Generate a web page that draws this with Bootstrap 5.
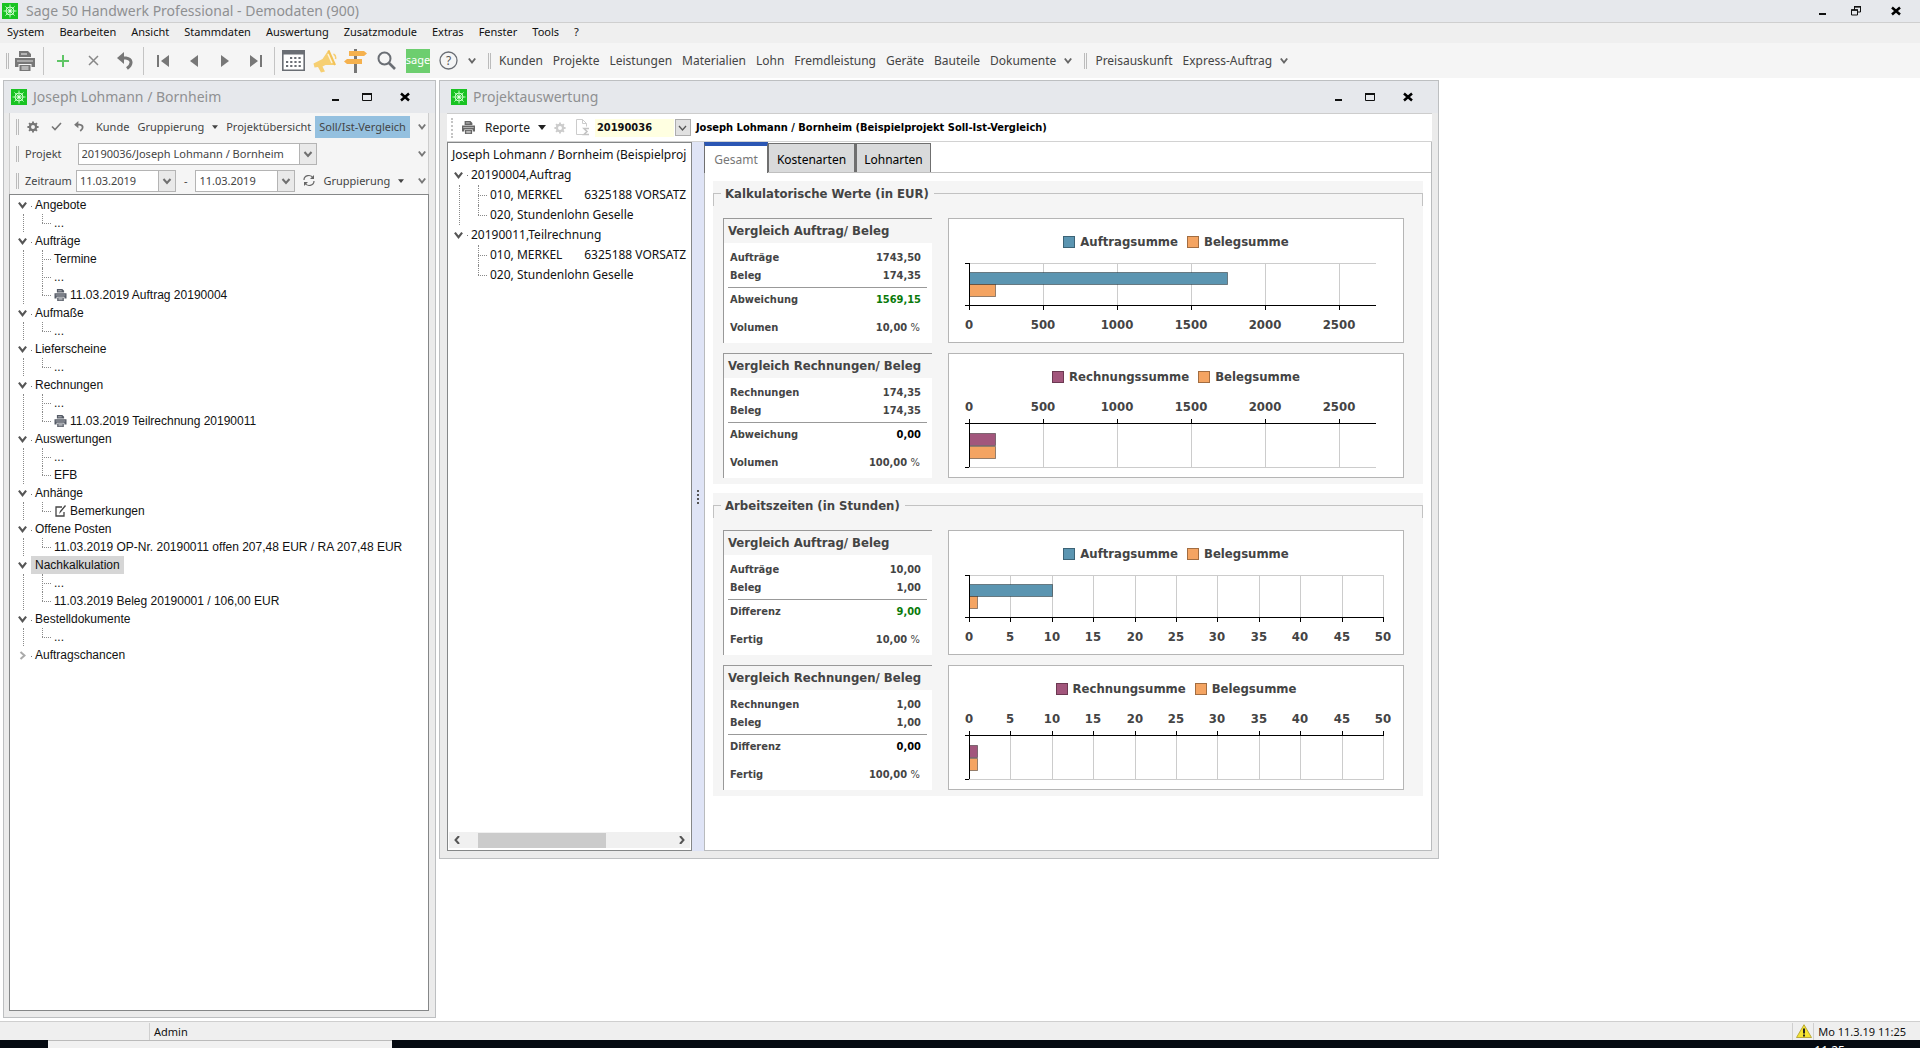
<!DOCTYPE html>
<html lang="de">
<head>
<meta charset="utf-8">
<meta name="viewport" content="width=device-width, initial-scale=1">
<title>Sage 50 Handwerk Professional - Demodaten (900)</title>
<link rel="stylesheet" href="https://cdn.jsdelivr.net/npm/bootstrap@5.3.0/dist/css/bootstrap.min.css">
<style>
:root{--ui:"Noto Sans","Open Sans",sans-serif;--tah:"DejaVu Sans Condensed","DejaVu Sans",sans-serif;--frame:#ebebeb;--cap:#e6e8ec}
body{font:12px/18px var(--ui);color:#444;background:#fff;overflow:hidden}
button{border:0;background:none;padding:0;color:inherit;font:inherit}
svg{display:block;flex:none}
.titletext{font-size:14px;line-height:20px;color:#8f9092}
.appbar{height:23px;background:var(--cap);border-bottom:1px solid #cfcfcf;padding:0 0 1px 2px}
.menubar{height:20px;background:#efefef;padding:0 0 2px 7px;gap:15px;font-size:11px;color:#111}
.menubar a{color:inherit;text-decoration:none}
.mainbar{height:35px;background:#f5f5f5;padding-left:6px}
.toolbtn{width:31px;height:30px;display:flex;align-items:center;justify-content:center}
.vsep{width:1px;height:28px;background:#c4c4c4;margin:0 3px}
.grip{width:3px;height:16px;border-left:1px solid #bbb;border-right:1px solid #bbb;flex:none}
.grip.dots{border-right:0;border-left:2px dotted #c4c4c4;height:20px}
.modlinks{gap:10px}
.workspace{display:grid;grid-template-columns:433fr 1000fr 478fr;column-gap:3px;padding:2px 0 3px 3px;min-height:0}
.mdi{border:1px solid #bdbfc1;background:var(--frame);display:flex;flex-direction:column;min-width:0;min-height:0}
.mdi-cap{height:32px;background:var(--cap);padding-left:7px;gap:6px;flex:none}
.mdi-cap .titletext{line-height:30px}
.winbtns button{height:22px;display:flex;align-items:center;justify-content:center}
.mdi .winbtns{padding-right:7px}
.mdi .winbtns button{width:32px}
.mdi .winbtns button:nth-child(2){width:30px}
.mdi .winbtns button:last-child{width:46px}
.appbar .winbtns button{width:34px}
.appbar .winbtns button:nth-child(2){width:32px}
.appbar .winbtns button:last-child{width:48px}
.lwrap{margin:0 6px 6px 5px}
.tools{background:#f5f5f5;border:1px solid #cdcdcd;border-width:0 1px;font-size:11px}
.toolrow{height:27px;padding:0 2px 0 6px}
.toolrow .grip{margin-right:4px}
.toolrow label{margin-left:2px}
.hot{background:#94c0df;height:22px;padding:0 4px}
.sel{appearance:none;border:1px solid #b4b4b4;border-radius:0;height:22px;font:11px/18px var(--ui);color:#444;padding:0 20px 0 3px;background:#fff url("data:image/svg+xml,%3Csvg xmlns='http://www.w3.org/2000/svg' width='17' height='20'%3E%3Cpath d='M0 0h17v20H0z' fill='%23e9e9e9'/%3E%3Cpath d='M.5 0v20' stroke='%23b4b4b4'/%3E%3Cpath d='M5.500 8l3.500 4 3.500-4' fill='none' stroke='%23707070' stroke-width='2'/%3E%3C/svg%3E") right center no-repeat}
#prj{width:239px}.dat{width:100px}
.treebox{border:1px solid #858788;background:#fff;color:#111;overflow:hidden}
.tree,.tree ul{list-style:none;margin:0;padding:0}
.tree{--rh:18px;white-space:pre}
.trow{height:var(--rh);line-height:var(--rh);display:flex;align-items:center}
.tree>li>.trow .tw{width:13px;display:flex;justify-content:center;flex:none}
.tree>li>.trow .tl{margin-left:2px;padding:0 4px;background:linear-gradient(#777,#777) 0 10px/1px 1px no-repeat}
.tree>li>.trow .tl.picked{background:#d6d6d6}
.tree ul{margin-left:7px;border-left:1px dotted #8a8a8a;padding-left:18px}
.tree>li.last>ul{border-color:transparent}
.tree ul li{position:relative;padding-left:12px}
.tree ul li::before{content:"";position:absolute;left:0;top:0;height:100%;border-left:1px dotted #8a8a8a}
.tree ul li:last-child::before{height:50%}
.tree ul li::after{content:"";position:absolute;left:0;top:50%;width:9px;border-top:1px dotted #8a8a8a}
.trow svg.ico{margin-right:3px}
.ltree{font-family:"Liberation Sans",Arial,sans-serif;padding:1px 0 0 6px}
.rtree{--rh:20px;padding:2px 0 0 4px}
.hscroll{height:16px;background:#f0f0f0;margin:0 1px 2px;padding:0 5px}
.hthumb{height:15px;background:#cbcbcb;width:128px;margin-left:18px}
.splitter{width:12px;background:#dfe4f6;flex:none}
.rwrap{margin:0 6px 7px 7px;border-top:1px solid #cdcdcd}
.rtools{background:#fff;height:28px;border-bottom:1px solid #d2d2d2;padding-left:4px;color:#222}
.repbtn{margin-left:10px}
.nr{width:79px;height:18px;border:0;background:#ffffe1;font:bold 11px var(--tah);color:#111;padding:0 2px}
.nrbtn{width:16px;height:17px;background:#e1e1e1;border:1px solid #adadad;margin:0 5px 0 1px}
.rname{font:bold 11px/18px var(--tah);color:#000}
.rbox{width:245px;flex:none}
.rpane{min-width:0;border:1px solid #b9bbbd;border-width:0 1px 1px 0}
.ptabs{display:flex;align-items:flex-end;height:31px;border-bottom:1px solid #bfbfbf}
.ptab{height:29px;background:#d9dadb;border:1px solid #6f6f6f;border-bottom:0;color:#000;font-size:12px;text-align:center;padding-top:3px}
.ptab.on{height:31px;background:#fff;border-top:4px solid #2b56b3;color:#777;margin-bottom:-1px;padding:0}
.t1{width:64px}.t2{width:87px}.t3{width:76px;border-left-width:2px}
.pbody{border-left:1px solid #b9bbbd;padding:8px 8px 54px 8px}
.grp{background:#f5f5f5;padding:0 19px 6px 10px;margin-bottom:9px}
.grp:last-child{margin-bottom:0}
.grp-head{height:37px;margin:0 -19px 0 -10px;padding-top:4px;font:bold 13px/18px var(--tah)}
.grp-head::before,.grp-head::after{content:"";height:13px;border-top:1px solid #c2c2c2;margin-top:8px}
.grp-head::before{width:8px;border-left:1px solid #c2c2c2}
.grp-head::after{flex:1;border-right:1px solid #c2c2c2}
.grp-head h2{font:inherit;margin:0;padding:0 5px 0 4px}
.pair{display:flex;gap:16px}
.pair+.pair{margin-top:10px}
.stat{width:209px;height:125px;flex:none;background:#fff;border-top:1px solid #999;border-left:1px solid #999;font:bold 11px/18px var(--tah);padding-right:5px}
.stat table{width:100%;border-collapse:separate;border-spacing:0}
.stat caption{caption-side:top;background:#f5f5f5;margin-right:-5px;padding:0 0 0 4px;font:bold 13px/24px var(--tah);color:#444;height:24px;white-space:nowrap}
.stat th{padding:0 0 0 6px}
.stat td{padding:0 6px 0 0;text-align:right}
.stat .r1>*{padding-top:6px}
.stat .rule td{padding:2px 0 3px 4px}
.stat .rule td div{border-top:1px solid #999}
.stat .r4>*{padding-top:10px}
.pos{color:#0a7a0a}.nul{color:#000}
.stat td.pct{padding-right:7px}
.pct span{font-weight:normal}
.chartbox{flex:1;min-width:0;height:125px;border:1px solid #b5b5b5;background:#fff;font:bold 13px/16px var(--tah);position:relative}
.keys{position:absolute;left:0;right:0;top:15px;display:flex;justify-content:center;gap:9px}
.keys span{display:flex;align-items:center;gap:5px}
.keys i{width:12px;height:12px;border:1px solid #0005}
.chartbox text{font:bold 13px var(--tah);fill:#444;text-anchor:middle}
.statusbar{height:19px;border-top:1px solid #cfcfcf;background:#efefef;font-size:11px;color:#111;line-height:18px}
.scell{border-left:1px solid #cfcfcf;height:17px}
.sadmin{margin-left:149px;padding-left:4px}
.swarn{padding:0 1px 0 3px}
.sclock{padding-right:14px}
.taskbar{height:8px;background:#050a11;overflow:hidden}
.task{width:344px;height:8px;background:#f1f1f1;margin-left:48px;border-top:1px solid #bbb}
.tclock{color:#fff;font-size:12px;line-height:18px;padding-top:2px;margin-right:75px}
</style>
</head>
<body class="d-flex flex-column vh-100">
<svg width="0" height="0" class="position-absolute" aria-hidden="true">
<symbol id="logo" viewBox="0 0 16 16"><path fill="#19c322" d="M0 0h16v16H0z"/><g stroke="#c9ffc9" fill="none"><circle cx="8" cy="8" r="4"/><path d="M8 1.500v13M1.500 8h13M3.400 3.400l9.200 9.200M12.600 3.400l-9.200 9.200" stroke-width=".9"/></g><circle cx="8" cy="8" r="1.500" fill="#e8ffe8"/></symbol>
<symbol id="printer" viewBox="0 0 20 20"><path fill="currentColor" d="M4 0h9l3 3v3H4zM0 7h20v9h-3.500v-3h-13v3H0zM4.500 14h11v6h-11z"/><path d="M6 3h6M6.500 16h7M6.500 18h7" stroke="#f5f5f5"/><path d="M2 10h16" stroke="#f5f5f5" stroke-width=".8"/></symbol>
<symbol id="undo" viewBox="0 0 16 18"><path d="M3 6h6c6 1 7 6 1 10.500" fill="none" stroke="currentColor" stroke-width="3"/><path d="M0 6l7-6v12z" fill="currentColor"/></symbol>
<symbol id="gear" viewBox="0 0 14 14"><circle cx="7" cy="7" r="3.600" fill="none" stroke="currentColor" stroke-width="2.600"/><path d="M7 .5v3M7 10.500v3M.5 7h3M10.500 7h3M2.400 2.400l2 2M9.600 9.600l2 2M11.600 2.400l-2 2M4.400 9.600l-2 2" stroke="currentColor" stroke-width="2.200"/></symbol>
<symbol id="chev" viewBox="0 0 8 8"><path d="M.8 1.500L4 5.500l3.200-4" fill="none" stroke="currentColor" stroke-width="1.900"/></symbol>
<symbol id="caret" viewBox="0 0 8 5"><path d="M0 0h8L4 5z" fill="currentColor"/></symbol>
<symbol id="wmin" viewBox="0 0 8 10"><path d="M0 7h7v2H0z" fill="#111"/></symbol>
<symbol id="wmax" viewBox="0 0 10 10"><path d="M.5 2h9v6.500h-9z" fill="none" stroke="#111"/><path d="M0 1h10v2H0z" fill="#111"/></symbol>
<symbol id="wclose" viewBox="0 0 10 10"><path d="M1 1.500l8 7M9 1.500l-8 7" stroke="#000" stroke-width="2.500"/></symbol>
</svg>

<header>
<div class="appbar d-flex align-items-center">
<svg width="16" height="16"><use href="#logo"/></svg>
<span class="titletext ms-2">Sage 50 Handwerk Professional - Demodaten (900)</span>
<div class="winbtns d-flex ms-auto"><button aria-label="Minimieren"><svg width="8" height="10"><use href="#wmin"/></svg></button><button aria-label="Wiederherstellen"><svg width="10" height="10" viewBox="0 0 10 10"><path d="M3.500 4V1h6v5H7M.5 4h6v5h-6z" fill="none" stroke="#111"/><path d="M3 .5h7M0 4h7" stroke="#111" stroke-width="1.500"/></svg></button><button aria-label="Schließen"><svg width="10" height="10"><use href="#wclose"/></svg></button></div>
</div>
<nav class="menubar d-flex align-items-center" aria-label="Menü"><a href="#">System</a><a href="#">Bearbeiten</a><a href="#">Ansicht</a><a href="#">Stammdaten</a><a href="#">Auswertung</a><a href="#">Zusatzmodule</a><a href="#">Extras</a><a href="#">Fenster</a><a href="#">Tools</a><a href="#">?</a></nav>
<div class="mainbar d-flex align-items-center">
<span class="grip"></span>
<button class="toolbtn" aria-label="Drucken"><svg width="20" height="20" color="#777"><use href="#printer"/></svg></button>
<span class="vsep"></span>
<button class="toolbtn" aria-label="Neu"><svg width="12" height="12"><path d="M6 0v12M0 6h12" stroke="#5fc566" stroke-width="2"/></svg></button>
<button class="toolbtn" aria-label="Löschen"><svg width="11" height="11"><path d="M1 1l9 9M10 1l-9 9" stroke="#888" stroke-width="1.500"/></svg></button>
<button class="toolbtn" aria-label="Rückgängig"><svg width="16" height="18" color="#777"><use href="#undo"/></svg></button>
<span class="vsep"></span>
<button class="toolbtn" aria-label="Erster"><svg width="12" height="12"><path d="M0 0h2v12H0zM12 0v12L4 6z" fill="#777"/></svg></button>
<button class="toolbtn" aria-label="Zurück"><svg width="8" height="12"><path d="M8 0v12L0 6z" fill="#777"/></svg></button>
<button class="toolbtn" aria-label="Weiter"><svg width="8" height="12"><path d="M0 0v12l8-6z" fill="#777"/></svg></button>
<button class="toolbtn" aria-label="Letzter"><svg width="12" height="12"><path d="M10 0h2v12h-2zM0 0v12l8-6z" fill="#777"/></svg></button>
<span class="vsep"></span>
<button class="toolbtn" aria-label="Kalender"><svg width="23" height="21"><path d="M.8.8h21.400v19.400H.8z" fill="#fff" stroke="#6a6e74" stroke-width="1.600"/><path d="M0 0h23v4.500H0z" fill="#6a6e74"/><path d="M8 8h12M4 12h16M4 16h16" stroke="#6a6e74" stroke-width="2.200" stroke-dasharray="2.200 2"/></svg></button>
<button class="toolbtn" aria-label="Meldungen"><svg width="24" height="24"><path d="M15.500 1l7 15-10 0-3 1.500 2.500 5-4 1-3-5.500-3.500.5-1-4 9-4.500z" fill="#f6cf72"/><path d="M15.500 1.500l6.500 14.500" stroke="#f3c257" stroke-width="2"/><path d="M15 5l4 9" stroke="#fdf3d8" stroke-width="1.500"/><path d="M20.500 5c2 1 2.500 3 2 5" stroke="#f6cf72" stroke-width="1.500" fill="none"/></svg></button>
<button class="toolbtn" aria-label="Wegweiser"><svg width="23" height="24"><path d="M10 0h3v24h-3z" fill="#777"/><path d="M5 2h15l3 2.500L20 7H5zM18 10H3L0 12.500 3 15h15z" fill="#f5b14e"/></svg></button>
<button class="toolbtn" aria-label="Suchen"><svg width="19" height="19"><circle cx="7.500" cy="7.500" r="6" fill="none" stroke="#6a6e74" stroke-width="2"/><path d="M12 12l6 6" stroke="#6a6e74" stroke-width="2.600"/></svg></button>
<button class="toolbtn" aria-label="Sage"><svg width="24" height="24"><path d="M0 0h24v24H0z" fill="#6dce6f"/><text x="12" y="15" text-anchor="middle" font-family="Noto Sans, sans-serif" font-size="11" fill="#fff">sage</text></svg></button>
<button class="toolbtn" aria-label="Hilfe"><svg width="19" height="19"><circle cx="9.500" cy="9.500" r="8.500" fill="none" stroke="#6a6e74" stroke-width="1.300"/><text x="9.500" y="14" text-anchor="middle" font-family="Noto Sans, sans-serif" font-size="12" fill="#555">?</text></svg></button>
<svg class="ms-1 me-2" width="8" height="8" color="#666"><use href="#chev"/></svg>
<span class="grip mx-1"></span>
<div class="modlinks d-flex align-items-center ms-1"><button>Kunden</button><button>Projekte</button><button>Leistungen</button><button>Materialien</button><button>Lohn</button><button>Fremdleistung</button><button>Geräte</button><button>Bauteile</button><button>Dokumente</button></div>
<svg class="mx-2" width="8" height="8" color="#666"><use href="#chev"/></svg>
<span class="grip mx-1"></span>
<div class="modlinks d-flex align-items-center ms-1"><button>Preisauskunft</button><button>Express-Auftrag</button></div>
<svg class="mx-2" width="8" height="8" color="#666"><use href="#chev"/></svg>
</div>
</header>

<main class="workspace flex-grow-1">
<section class="mdi" aria-label="Projekt">
<div class="mdi-cap d-flex align-items-center">
<svg width="16" height="16"><use href="#logo"/></svg><span class="titletext">Joseph Lohmann / Bornheim</span>
<div class="winbtns d-flex ms-auto"><button aria-label="Minimieren"><svg width="8" height="10"><use href="#wmin"/></svg></button><button aria-label="Maximieren"><svg width="10" height="10"><use href="#wmax"/></svg></button><button aria-label="Schließen"><svg width="10" height="10"><use href="#wclose"/></svg></button></div>
</div>
<div class="lwrap d-flex flex-column flex-grow-1">
<div class="tools">
<div class="toolrow d-flex align-items-center"><span class="grip"></span>
<button class="ms-1" aria-label="Einstellungen"><svg width="12" height="12" color="#777"><use href="#gear"/></svg></button>
<button class="ms-2 ps-1" aria-label="Übernehmen"><svg width="11" height="9"><path d="M1 4.500l3 3L10 1" fill="none" stroke="#777" stroke-width="1.600"/></svg></button>
<button class="ms-2 ps-1" aria-label="Rückgängig"><svg width="10" height="11" color="#777"><use href="#undo"/></svg></button>
<button class="ms-2 ps-1">Kunde</button><button class="ms-2 d-flex align-items-center">Gruppierung<svg class="ms-2" width="6" height="4"><use href="#caret"/></svg></button><button class="ms-2">Projektübersicht</button><button class="hot ms-1">Soll/Ist-Vergleich</button>
<svg class="ms-auto" width="8" height="8" color="#777"><use href="#chev"/></svg></div>
<div class="toolrow d-flex align-items-center"><span class="grip"></span><label for="prj">Projekt</label>
<select id="prj" class="sel ms-3"><option>20190036/Joseph Lohmann / Bornheim</option></select>
<svg class="ms-auto" width="8" height="8" color="#777"><use href="#chev"/></svg></div>
<div class="toolrow d-flex align-items-center"><span class="grip"></span><label for="von">Zeitraum</label>
<select id="von" class="sel dat ms-1"><option>11.03.2019</option></select><span class="px-2">-</span><select class="sel dat" aria-label="Zeitraum bis"><option>11.03.2019</option></select>
<button class="ms-2" aria-label="Aktualisieren"><svg width="12" height="13" viewBox="0 0 12 13"><path d="M1 6c0-5 7-6 9-2M11 7c0 5-7 6-9 2" fill="none" stroke="#666" stroke-width="1.200"/><path d="M11 1v4H7zM1 12V8h4z" fill="#666"/></svg></button>
<button class="ms-2 d-flex align-items-center">Gruppierung<svg class="ms-2" width="6" height="4"><use href="#caret"/></svg></button>
<svg class="ms-auto" width="8" height="8" color="#777"><use href="#chev"/></svg></div>
</div>
<div class="treebox flex-grow-1">
<ul class="tree ltree" id="lt"></ul>
</div>
</div>
</section>

<section class="mdi align-self-start" aria-label="Projektauswertung">
<div class="mdi-cap d-flex align-items-center">
<svg class="ms-1" width="16" height="16"><use href="#logo"/></svg><span class="titletext">Projektauswertung</span>
<div class="winbtns d-flex ms-auto"><button aria-label="Minimieren"><svg width="8" height="10"><use href="#wmin"/></svg></button><button aria-label="Maximieren"><svg width="10" height="10"><use href="#wmax"/></svg></button><button aria-label="Schließen"><svg width="10" height="10"><use href="#wclose"/></svg></button></div>
</div>
<div class="rwrap">
<div class="rtools d-flex align-items-center">
<span class="grip dots me-2"></span><svg width="13" height="13" color="#666"><use href="#printer"/></svg>
<button class="repbtn d-flex align-items-center">Reporte<svg class="ms-2" width="8" height="5"><use href="#caret"/></svg></button>
<svg class="ms-2" width="12" height="12" color="#ccc"><use href="#gear"/></svg>
<svg class="ms-2 me-1" width="17" height="17"><path d="M10 15.500H2.500V.5h6l4 4v3M8.500.5v4h4" fill="none" stroke="#ccc"/><path d="M15 9.500h-5l3 3-3 3h5" fill="none" stroke="#c4c4c4" stroke-width="1.600"/></svg>
<input class="nr" value="20190036" aria-label="Projektnummer"><button class="nrbtn d-flex align-items-center justify-content-center" aria-label="Auswahl"><svg width="9" height="6"><path d="M1 1l3.500 4L8 1" fill="none" stroke="#555" stroke-width="1.300"/></svg></button>
<span class="rname">Joseph Lohmann / Bornheim (Beispielprojekt Soll-Ist-Vergleich)</span>
</div>
<div class="d-flex">
<div class="treebox rbox d-flex flex-column">
<ul class="tree rtree flex-grow-1" id="rt"><li class="trow">Joseph Lohmann / Bornheim (Beispielproj</li></ul>
<div class="hscroll d-flex align-items-center"><svg width="6" height="8"><path d="M5 0L1.500 4 5 8" fill="none" stroke="#555" stroke-width="2"/></svg><div class="hthumb"></div><svg class="ms-auto" width="6" height="8"><path d="M1 0l3.500 4L1 8" fill="none" stroke="#555" stroke-width="2"/></svg></div>
</div>
<div class="splitter d-flex align-items-center justify-content-center"><svg width="2" height="14"><path d="M1 0v14" stroke="#555" stroke-width="2" stroke-dasharray="2 2"/></svg></div>
<div class="flex-grow-1 bg-white rpane">
<div class="ptabs" role="tablist"><button class="ptab on t1" role="tab">Gesamt</button><button class="ptab t2" role="tab">Kostenarten</button><button class="ptab t3" role="tab">Lohnarten</button></div>
<div class="pbody" id="pb"></div>
</div>
</div>
</div>
</section>
</main>

<footer>
<div class="statusbar d-flex align-items-center">
<span class="scell sadmin">Admin</span>
<span class="scell swarn ms-auto d-flex align-items-center"><svg width="16" height="14" viewBox="0 0 16 14"><path d="M8 .7L15.500 13.500H.5z" fill="#f5e431" stroke="#b9a93a"/><path d="M8 4.500v5M8 10.500v2" stroke="#222" stroke-width="2"/></svg></span>
<span class="scell ps-1 sclock">Mo 11.3.19 11:25</span>
</div>
<div class="taskbar d-flex justify-content-between"><div class="task"></div><div class="tclock">11:25</div></div>
</footer>
<script src="https://cdn.jsdelivr.net/npm/bootstrap@5.3.0/dist/js/bootstrap.bundle.min.js"></script>
<script>
const pr='<svg class="ico" width="13" height="12" color="#555b66"><use href="#printer"/></svg>';
const ed='<svg class="ico" width="13" height="12"><path d="M8 2H2v9h8V7" fill="none" stroke="#444" stroke-width="1.300"/><path d="M5 9l1-3 5-6 1 1-5 6z" fill="#444"/></svg>';
const down='<svg width="9" height="9" color="#555"><use href="#chev"/></svg>';
const right='<svg width="7" height="9"><path d="M1.500 1l4 3.500-4 3.500" fill="none" stroke="#aaa" stroke-width="2"/></svg>';
// Tree branch: [label, children, selected]
function branch([label,kids,picked],i,all){
  return `<li class="${i===all.length-1?'last':''}"><div class="trow"><span class="tw">${kids.length?down:right}</span><span class="tl ${picked?'picked':''}">${label}</span></div>`+
    (kids.length?`<ul>${kids.map(k=>`<li><div class="trow">${k}</div></li>`).join('')}</ul>`:'')+'</li>';
}
lt.innerHTML=[
 ['Angebote',['...']],['Aufträge',['Termine','...',pr+'11.03.2019 Auftrag 20190004']],['Aufmaße',['...']],['Lieferscheine',['...']],
 ['Rechnungen',['...',pr+'11.03.2019 Teilrechnung 20190011']],['Auswertungen',['...','EFB']],['Anhänge',[ed+'Bemerkungen']],
 ['Offene Posten',['11.03.2019 OP-Nr. 20190011 offen 207,48 EUR / RA 207,48 EUR']],
 ['Nachkalkulation',['...','11.03.2019 Beleg 20190001 / 106,00 EUR'],true],['Bestelldokumente',['...']],['Auftragschancen',[]]
].map(branch).join('');
const pos=['010, MERKEL       6325188 VORSATZ','020, Stundenlohn Geselle'];
rt.innerHTML+=[['20190004,Auftrag',pos],['20190011,Teilrechnung',pos]].map(branch).join('');

const BLUE='#5b95b1',PLUM='#a2567c',SAND='#f4a462';
// Two horizontal bars on a shared scale; the axis sits below or above the plot
function chart(o){
  const x0=20,unit=o.px/o.step,top=o.flip?69:44,bot=o.flip?113:86,axis=o.flip?top:bot,far=o.flip?bot:top,by=o.flip?79:53;
  let s='';
  for(let v=0;v<=o.max;v+=o.step){
    const x=Math.round(x0+v*unit);
    if(v)s+=`<path d="M${x+.5} ${top}V${bot}" stroke="#ccc"/>`;
    s+=`<path d="M${x+.5} ${axis}v${o.flip?-4:5}" stroke="#000"/><text x="${x}" y="${o.flip?57:110}">${v}</text>`;
  }
  s+=`<path d="M${x0} ${far+.5}H${o.end}" stroke="#ccc"/>`;
  [[o.a,o.c],[o.b,SAND]].forEach(([v,c],i)=>s+=`<rect x="${x0+.5}" y="${by+i*13-(i&&!o.flip?1:0)+.5}" width="${Math.round(v*unit)}" height="12" fill="${c}" stroke="#0006"/>`);
  s+=`<path d="M${x0+.5} ${top}V${bot}M${x0-4} ${far+.5}h4M${x0-4} ${axis+.5}H${o.end}" stroke="#000" fill="none"/>`;
  return `<div class="chartbox"><div class="keys"><span><i style="background:${o.c}"></i>${o.name}</span><span><i style="background:${SAND}"></i>Belegsumme</span></div><svg width="100%" height="123">${s}</svg></div>`;
}
function stat(t,n,r){
  return `<div class="stat"><table><caption>${t}</caption><tbody><tr class="r1"><th scope="row">${n[0]}</th><td>${r[0]}</td></tr><tr><th scope="row">Beleg</th><td>${r[1]}</td></tr><tr class="rule"><td colspan="2"><div></div></td></tr><tr><th scope="row">${n[1]}</th><td class="${r[2]==='0,00'?'nul':'pos'}">${r[2]}</td></tr><tr class="r4"><th scope="row">${n[2]}</th><td class="pct">${r[3]} <span>%</span></td></tr></tbody></table></div>`;
}
function group(title,n,g,a,b){
  return `<section class="grp"><div class="grp-head d-flex"><h2>${title}</h2></div><div class="pair">${stat('Vergleich Auftrag/ Beleg',['Aufträge',...n],a.r)}${chart({...g,...a})}</div><div class="pair">${stat('Vergleich Rechnungen/ Beleg',['Rechnungen',...n],b.r)}${chart({...g,...b})}</div></section>`;
}
pb.innerHTML=group('Kalkulatorische Werte (in EUR)',['Abweichung','Volumen'],{max:2500,step:500,px:74,end:427},
  {name:'Auftragsumme',c:BLUE,a:1743.5,b:174.35,r:['1743,50','174,35','1569,15','10,00']},
  {name:'Rechnungssumme',c:PLUM,a:174.35,b:174.35,flip:1,r:['174,35','174,35','0,00','100,00']})+
 group('Arbeitszeiten (in Stunden)',['Differenz','Fertig'],{max:50,step:5,px:41.4,end:435},
  {name:'Auftragsumme',c:BLUE,a:10,b:1,r:['10,00','1,00','9,00','10,00']},
  {name:'Rechnungsumme',c:PLUM,a:1,b:1,flip:1,r:['1,00','1,00','0,00','100,00']});
</script>
</body>
</html>
